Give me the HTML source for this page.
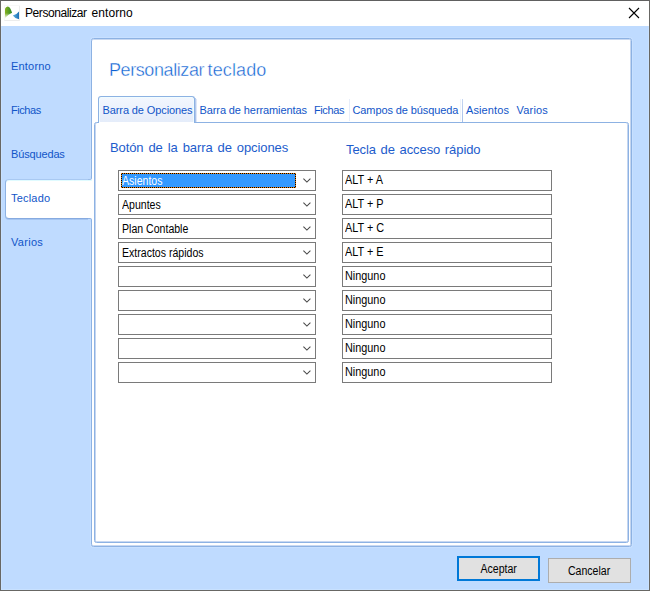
<!DOCTYPE html>
<html lang="es">
<head>
<meta charset="utf-8">
<title>Personalizar entorno</title>
<style>
html,body{margin:0;padding:0;}
body{width:650px;height:591px;overflow:hidden;background:#bfdbff;position:relative;
  font-family:"Liberation Sans",sans-serif;font-size:11px;color:#000;}
*{box-sizing:border-box;}
.abs{position:absolute;}
.t{position:absolute;white-space:nowrap;line-height:20px;height:20px;}
#win{position:absolute;left:0;top:0;width:650px;height:591px;border:1px solid #686764;border-top-color:#606060;pointer-events:none;z-index:50;}
#titlebar{position:absolute;left:1px;top:1px;width:648px;height:25px;background:#fff;}
#title{left:25px;top:3px;font-size:12px;color:#000;}
.side{left:11px;color:#1155c8;font-size:11px;}
#seltab{position:absolute;left:5px;top:179px;width:87px;height:40px;background:#fff;border:1px solid #8db2e3;border-top-color:#a9c9f2;border-bottom-color:#86aae0;border-right:none;border-radius:4px 0 0 4px;box-shadow:0 1px 0 rgba(134,170,224,.45),inset 0 1px 0 #e0fbff;}
#outer{position:absolute;left:91px;top:38px;width:541px;height:509px;background:#fff;border:1px solid #8db2e3;border-radius:2.5px;box-shadow:inset 0 1px 0 #c8d8f1,inset -1px 0 0 #c5d6f0,inset 0 -1px 0 #c8d8f1,0 0 0 1px rgba(255,255,255,.14);}
#inner{position:absolute;left:94px;top:122px;width:535px;height:421px;background:#fff;border:1px solid #8db2e3;border-radius:2.5px;box-shadow:inset 1px 0 0 #c5d6f0,inset -1px 0 0 #c5d6f0,inset 0 -1px 0 #c8d8f1;}
#h1{left:109px;top:60px;font-size:18px;color:#0b60d2;letter-spacing:-0.3px;-webkit-text-stroke:0.4px #fff;}
.tab{color:#1155c8;font-size:11px;top:100px;}
#tabsel{position:absolute;left:98px;top:96px;width:97px;height:27px;border:1px solid #8db2e3;border-bottom:none;border-radius:3px 3px 0 0;
  background:linear-gradient(#f3f7fe,#e4ecfa);box-shadow:inset 1px 1px 0 rgba(240,252,255,.9),inset -1px 0 0 rgba(240,252,255,.9);}
.h2{font-size:13px;color:#1d5ccc;}
.combo{position:absolute;left:118px;width:198px;height:21px;border:1px solid #7a7a7a;background:#fff;}
.box{position:absolute;left:342px;width:210px;height:21px;border:1px solid #7a7a7a;background:#fff;}
.ct{position:absolute;left:3px;top:0;line-height:19px;font-size:12px;white-space:nowrap;transform:scaleX(0.88);transform-origin:0 0;}
.combo .ct{top:1px;}
.box .ct{left:2px;transform:scaleX(0.905);}
.chev{position:absolute;left:184px;top:7px;width:11px;height:7px;}
.btn{position:absolute;background:#e1e1e1;text-align:center;font-size:12px;}
.btn span{display:inline-block;transform:scaleX(0.88);position:relative;top:1px;}
#tabsel::after{content:"";position:absolute;left:0;right:0;bottom:0;height:1px;background:#fff;}
</style>
</head>
<body>
<div id="titlebar"></div>
<div class="abs" style="left:1px;top:26px;width:648px;height:564px;box-shadow:inset 1px 0 0 #c8e1ff,inset -1px 0 0 #c8e1ff,inset 0 -1px 0 #c8e1ff"></div>
<svg class="abs" style="left:4px;top:5px" width="16" height="16" viewBox="0 0 16 16">
  <defs>
    <linearGradient id="gg" x1="0" y1="0" x2="1" y2="0"><stop offset="0" stop-color="#86b21f"/><stop offset="1" stop-color="#2f8a2c"/></linearGradient>
    <linearGradient id="gf" x1="0" y1="0" x2="0" y2="1"><stop offset="0.6" stop-color="#fff" stop-opacity="0"/><stop offset="1" stop-color="#fff" stop-opacity="0.85"/></linearGradient>
    <linearGradient id="bg" x1="0" y1="0" x2="1" y2="0"><stop offset="0" stop-color="#5fb0e0"/><stop offset="1" stop-color="#1a6fb6"/></linearGradient>
  </defs>
  <rect x="0.5" y="0.5" width="15" height="15" fill="none" stroke="#f8f8f8" stroke-width="1"/>
  <path d="M0.5 15.5 H15.5 V1" fill="none" stroke="#ececec" stroke-width="1"/>
  <path d="M1 12.5 L1 3.8 Q1.8 1.9 3.6 1.5 Q5.3 1.5 6 3.1 Q7.3 5.4 8.1 7.8 Q4.6 9.2 1 12.5 Z" fill="url(#gg)"/>
  <path d="M1 12.5 L1 3.8 Q1.8 1.9 3.6 1.5 Q5.3 1.5 6 3.1 Q7.3 5.4 8.1 7.8 Q4.6 9.2 1 12.5 Z" fill="url(#gf)"/>
  <path d="M15 6.6 L15 14.2 Q11 13.6 8.8 10.4 Q12.6 10 15 6.6 Z" fill="url(#bg)"/>
</svg>
<div class="t" id="title"><span style="letter-spacing:-0.43px">Personalizar</span><span style="position:absolute;left:66.5px;top:0;letter-spacing:0.08px">entorno</span></div>
<svg class="abs" style="left:628px;top:7px" width="12" height="12" viewBox="0 0 12 12">
  <path d="M1 1 L11 11 M11 1 L1 11" stroke="#000" stroke-width="1.1" fill="none"/>
</svg>

<div id="outer"></div>
<div id="seltab"></div>
<div class="abs" style="left:90px;top:178px;width:2px;height:2px;background:#fff"></div>
<div class="abs" style="left:88px;top:176px;width:4px;height:4px;background:#bfdbff;border-right:1px solid #8db2e3;border-bottom:1px solid #9bbce9;border-bottom-right-radius:2px"></div>
<div class="abs" style="left:90px;top:218px;width:2px;height:2px;background:#fff"></div>
<div class="abs" style="left:88px;top:218px;width:4px;height:4px;background:#bfdbff;border-right:1px solid #8db2e3;border-top:1px solid #8fb2e4;border-top-right-radius:2px"></div>
<div class="t side" style="top:56px;letter-spacing:0.2px">Entorno</div>
<div class="t side" style="top:100px;letter-spacing:-0.45px">Fichas</div>
<div class="t side" style="top:144px;letter-spacing:-0.15px">Búsquedas</div>
<div class="t side" style="top:188px;letter-spacing:0.2px">Teclado</div>
<div class="t side" style="top:232px;letter-spacing:0.3px">Varios</div>

<div class="t" id="h1"><span style="letter-spacing:-0.41px">Personalizar</span><span style="position:absolute;left:98.5px;top:0;letter-spacing:0.13px">teclado</span></div>

<div id="inner"></div>
<div id="tabsel"></div>
<div class="abs" style="left:195px;top:98px;width:1px;height:24px;background:linear-gradient(#b9cdee,#a9c1e9)"></div>
<div class="abs" style="left:196px;top:99px;width:1px;height:23px;background:#dde7f7"></div>
<div class="t tab" style="left:102.5px;letter-spacing:-0.1px">Barra de Opciones</div>
<div class="t tab" style="left:199.5px;letter-spacing:-0.1px">Barra de herramientas</div>
<div class="t tab" style="left:314px;letter-spacing:-0.4px">Fichas</div>
<div class="t tab" style="left:352.5px;letter-spacing:-0.1px">Campos de búsqueda</div>
<div class="t tab" style="left:466px;letter-spacing:0.1px">Asientos</div>
<div class="t tab" style="left:516.5px;letter-spacing:0.2px">Varios</div>
<div class="abs" style="left:349px;top:99px;width:1px;height:22px;background:#e6edfa"></div>
<div class="abs" style="left:460px;top:99px;width:1px;height:22px;background:#eef3fc"></div>
<div class="abs" style="left:462px;top:99px;width:1px;height:23px;background:linear-gradient(#c6d6f2,#a6bfe9)"></div>

<div class="t h2" style="left:110px;top:138px;letter-spacing:-0.1px;word-spacing:1.5px">Botón de la barra de opciones</div>
<div class="t h2" style="left:346px;top:140px;letter-spacing:-0.08px;word-spacing:1.1px">Tecla de acceso rápido</div>

<div class="combo" style="top:170px"><div class="abs" style="left:2px;top:2px;width:175px;height:15px;background:repeating-conic-gradient(#000 0 25%,#ee8210 0 50%) 0 0/2px 2px"><div class="abs" style="left:1px;top:1px;right:1px;bottom:1px;background:#3399ff"></div></div><div class="ct" style="color:#fff">Asientos</div><svg class="chev" viewBox="0 0 11 7"><path d="M0.4 0.6 L3.9 4.1 L7.4 0.6" stroke="#484848" stroke-width="1.05" fill="none"/></svg></div>
<div class="combo" style="top:194px"><div class="ct">Apuntes</div><svg class="chev" viewBox="0 0 11 7"><path d="M0.4 0.6 L3.9 4.1 L7.4 0.6" stroke="#484848" stroke-width="1.05" fill="none"/></svg></div>
<div class="combo" style="top:218px"><div class="ct">Plan Contable</div><svg class="chev" viewBox="0 0 11 7"><path d="M0.4 0.6 L3.9 4.1 L7.4 0.6" stroke="#484848" stroke-width="1.05" fill="none"/></svg></div>
<div class="combo" style="top:242px"><div class="ct">Extractos rápidos</div><svg class="chev" viewBox="0 0 11 7"><path d="M0.4 0.6 L3.9 4.1 L7.4 0.6" stroke="#484848" stroke-width="1.05" fill="none"/></svg></div>
<div class="combo" style="top:266px"><svg class="chev" viewBox="0 0 11 7"><path d="M0.4 0.6 L3.9 4.1 L7.4 0.6" stroke="#484848" stroke-width="1.05" fill="none"/></svg></div>
<div class="combo" style="top:290px"><svg class="chev" viewBox="0 0 11 7"><path d="M0.4 0.6 L3.9 4.1 L7.4 0.6" stroke="#484848" stroke-width="1.05" fill="none"/></svg></div>
<div class="combo" style="top:314px"><svg class="chev" viewBox="0 0 11 7"><path d="M0.4 0.6 L3.9 4.1 L7.4 0.6" stroke="#484848" stroke-width="1.05" fill="none"/></svg></div>
<div class="combo" style="top:338px"><svg class="chev" viewBox="0 0 11 7"><path d="M0.4 0.6 L3.9 4.1 L7.4 0.6" stroke="#484848" stroke-width="1.05" fill="none"/></svg></div>
<div class="combo" style="top:362px"><svg class="chev" viewBox="0 0 11 7"><path d="M0.4 0.6 L3.9 4.1 L7.4 0.6" stroke="#484848" stroke-width="1.05" fill="none"/></svg></div>

<div class="box" style="top:170px"><div class="ct">ALT + A</div></div>
<div class="box" style="top:194px"><div class="ct">ALT + P</div></div>
<div class="box" style="top:218px"><div class="ct">ALT + C</div></div>
<div class="box" style="top:242px"><div class="ct">ALT + E</div></div>
<div class="box" style="top:266px"><div class="ct">Ninguno</div></div>
<div class="box" style="top:290px"><div class="ct">Ninguno</div></div>
<div class="box" style="top:314px"><div class="ct">Ninguno</div></div>
<div class="box" style="top:338px"><div class="ct">Ninguno</div></div>
<div class="box" style="top:362px"><div class="ct">Ninguno</div></div>

<div class="btn" style="left:457px;top:556px;width:83px;height:25px;border:2px solid #0078d7;line-height:21px"><span>Aceptar</span></div>
<div class="btn" style="left:548px;top:558px;width:83px;height:25px;border:1px solid #adadad;line-height:23px"><span>Cancelar</span></div>

<div id="win"></div>
</body>
</html>
